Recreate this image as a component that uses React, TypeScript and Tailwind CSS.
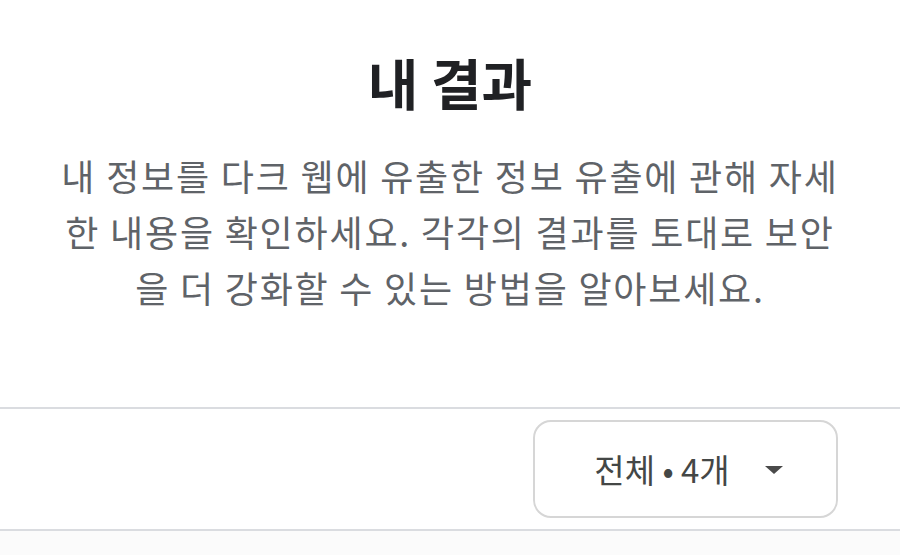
const lines = [
  '내 정보를 다크 웹에 유출한 정보 유출에 관해 자세',
  '한 내용을 확인하세요. 각각의 결과를 토대로 보안',
  '을 더 강화할 수 있는 방법을 알아보세요.',
];

function FilterButton() {
  return (
    <button
      type="button"
      className="flex h-[98px] w-[305px] items-center justify-center gap-[35px] rounded-[18px] border-2 border-[#d6d6d6] bg-white pl-[6px]"
    >
      <span className="text-[33px] leading-none text-[#444746]">전체 • 4개</span>
      <svg width="18" height="8" viewBox="0 0 18 8" aria-hidden className="mt-[2px]">
        <path d="M0 0h18L9 8z" fill="#4a4a4a" />
      </svg>
    </button>
  );
}

export default function App() {
  return (
    <div className="flex h-[555px] w-[900px] flex-col overflow-hidden bg-white font-['Noto_Sans_CJK_KR','Noto_Sans',sans-serif]">
      <h1 className="mt-[49px] text-center text-[55px] font-bold leading-[64px] text-[#202124]">
        내 결과
      </h1>
      <p className="mt-[34px] text-center text-[36px] leading-[56px] tracking-[1.8px] text-[#5f6368]">
        {lines.map((l) => (
          <span key={l} className="block">
            {l}
          </span>
        ))}
      </p>
      <div className="mt-[92px] flex justify-end border-y-2 border-[#dadce0] px-[62px] py-[11px]">
        <FilterButton />
      </div>
      <div className="flex-1 bg-[#fbfbfb]" />
    </div>
  );
}
